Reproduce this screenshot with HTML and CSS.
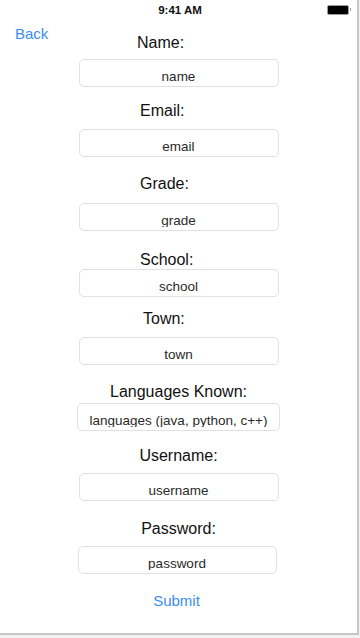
FILE: index.html
```html
<!DOCTYPE html>
<html lang="en">
<head>
  <meta charset="UTF-8" />
  <title>Sign Up</title>
  <link rel="stylesheet" href="styles.css">
</head>
<body>
  <div class="screen">
    <div class="statusbar">
      <span></span>
      <span class="time">9:41 AM</span>
      <span class="battery"><span class="cell"></span><span class="nub"></span></span>
    </div>

    <a class="back" href="#">Back</a>

    <form class="form">
      <label class="label left name-label">Name:</label>
      <div class="field f-name"><span class="val">name</span></div>

      <label class="label left l-email">Email:</label>
      <div class="field f-email"><span class="val">email</span></div>

      <label class="label left l-grade">Grade:</label>
      <div class="field f-grade"><span class="val">grade</span></div>

      <label class="label left l-school">School:</label>
      <div class="field f-school"><span class="val">school</span></div>

      <label class="label left town-label l-town">Town:</label>
      <div class="field f-town"><span class="val">town</span></div>

      <label class="label l-lang">Languages Known:</label>
      <div class="field wide f-lang"><span class="val">languages (java, python, c++)</span></div>

      <label class="label l-user">Username:</label>
      <div class="field f-user"><span class="val">username</span></div>

      <label class="label l-pass">Password:</label>
      <div class="field pw f-pass"><span class="val">password</span></div>

      <button type="button" class="submit">Submit</button>
    </form>
  </div>
</body>
</html>
```

FILE: styles.css
```css
body {
  margin: 0;
  background-color: #f1f1f1;
  font-family: 'Liberation Sans', Arial, sans-serif;
}
.screen {
  position: relative;
  width: 357px;
  height: 633px;
  background: #fff;
  border-right: 2px solid #c6c6c6;
  border-bottom: 2px solid #c6c6c6;
  overflow: hidden;
}
.statusbar {
  display: grid;
  grid-template-columns: 1fr auto 1fr;
  align-items: center;
  height: 20px;
  padding-left: 3px;
}
.time {
  font-size: 11.5px;
  font-weight: bold;
  line-height: 20px;
  color: #111;
}
.battery {
  justify-self: end;
  display: flex;
  align-items: center;
  margin-right: 6px;
  margin-top: -1px;
}
.cell {
  width: 20px;
  height: 8px;
  background: #000;
  border: 1px solid #9a9a9a;
  border-radius: 2px;
}
.nub {
  width: 1px;
  height: 3px;
  background: #9a9a9a;
  margin-left: 1px;
}
.back {
  position: absolute;
  top: 25px;
  left: 15px;
  font-size: 15px;
  line-height: 18px;
  color: #3b8df5;
  text-decoration: none;
}
.form {
  display: flex;
  flex-direction: column;
  align-items: center;
}
.label {
  align-self: stretch;
  text-align: center;
  font-size: 16px;
  line-height: 18px;
  color: #111;
}
.label.left {
  text-align: left;
  padding-left: 140px;
}
.name-label {
  margin-top: 14px;
}
.label.name-label {
  padding-left: 137px;
}
.label.town-label {
  padding-left: 143px;
}
.field {
  box-sizing: border-box;
  width: 200px;
  height: 28px;
  border: 1px solid #e1e1e1;
  border-radius: 5px;
  background: #fff;
  text-align: center;
  padding: 0 4px;
}
.field.wide {
  width: 203px;
}
.field.pw {
  width: 199px;
  margin-right: 3px;
}
.val {
  display: block;
  box-sizing: border-box;
  height: 23px;
  padding-top: 9px;
  overflow: hidden;
  font-size: 13.5px;
  line-height: 16px;
  color: #2a2a2a;
  white-space: nowrap;
}
.f-name { margin-top: 7px; }
.l-email { margin-top: 15px; }
.f-email { margin-top: 9px; }
.l-grade { margin-top: 18px; }
.f-grade { margin-top: 10px; }
.l-school { margin-top: 20px; }
.f-school { margin-top: 0; }
.l-town { margin-top: 13px; }
.f-town { margin-top: 9px; }
.l-lang { margin-top: 18px; }
.f-lang { margin-top: 2px; }
.l-user { margin-top: 16px; }
.f-user { margin-top: 8px; }
.l-pass { margin-top: 19px; }
.f-pass { margin-top: 8px; }
.submit {
  margin-top: 18px;
  padding: 0;
  border: none;
  background: none;
  font-family: inherit;
  font-size: 15px;
  line-height: 18px;
  color: #3b8df5;
  cursor: pointer;
  margin-right: 4px;
}
```
